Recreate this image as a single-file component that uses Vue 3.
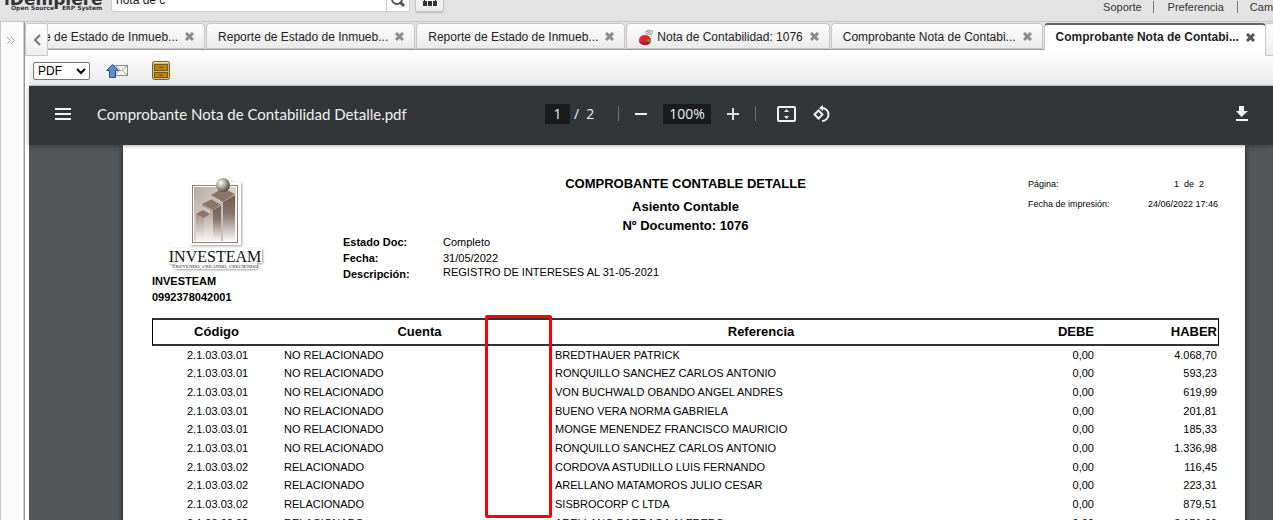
<template>
  <div class="desktop">
    <!-- Barra superior -->
    <header class="topbar">
      <svg class="brand" viewBox="0 0 102 24" role="img" aria-label="iDempiere">
        <text class="brand-name" x="0" y="17">iDempiere</text>
        <text class="brand-sub" x="7" y="22">Open Source</text>
        <text class="brand-sub" x="58" y="22">ERP System</text>
      </svg>
      <div class="search">
        <input v-model="query" type="text" aria-label="Buscar" />
        <button type="button" aria-label="Buscar documento">
          <svg width="16" height="16" viewBox="0 0 16 16" fill="none" stroke="#555" stroke-width="2">
            <circle cx="7" cy="7" r="5" />
            <path d="M10 10l4 4" stroke-width="3" />
          </svg>
        </button>
      </div>
      <button class="menu-btn" type="button" aria-label="Menú">
        <svg width="16" height="14" viewBox="0 0 16 14" fill="#333">
          <path d="M6 0h4v4H6zM7 4h2v2h5v2h-1V7H3v1H2V6h5zM1 8h4v5H1zM6 8h4v5H6zM11 8h4v5h-4z" />
        </svg>
      </button>
      <nav class="user-links">
        <a href="#">Soporte</a>
        <a href="#">Preferencia</a>
        <a href="#">Cambiar Rol</a>
      </nav>
    </header>

    <div class="workspace">
      <aside class="west">
        <button type="button" aria-label="Expandir panel">
          <svg width="8" height="9" viewBox="0 0 8 9" fill="none" stroke="#a8a8a8" stroke-width="1">
            <path d="M0 1l3.500 3.500L0 8M4 1l3.500 3.500L4 8" />
          </svg>
        </button>
      </aside>

      <main class="main">
        <!-- Pestañas de ventanas abiertas -->
        <div class="tabbar">
          <button class="scroll scroll-left" type="button" aria-label="Anterior">
            <svg width="8" height="12" viewBox="0 0 8 12" fill="none" stroke="#777" stroke-width="2">
              <path d="M7 1L2 6l5 5" />
            </svg>
          </button>
          <div class="tab-clip">
            <ul class="tabs">
              <li v-for="(tab, i) in tabs" :key="i" class="tab" :class="{ active: i === activeTab }" @click="activeTab = i">
                <svg v-if="tab.icon" class="tab-icon" width="16" height="16" viewBox="0 0 16 16">
                  <path d="M7 3l3-2 5 1-2 4-4-1z" fill="#e8e8e8" stroke="#aaa" />
                  <path d="M9 2l4 3M12 2l-3 3" stroke="#999" />
                  <ellipse cx="7" cy="11" rx="6" ry="5" fill="#e8202a" />
                  <path d="M1 12a6 4 0 0 0 12 0q-6 3-12 0z" fill="#b5121b" />
                  <path d="M8 11l5-1-1 4z" fill="#3fae2a" />
                </svg>
                <span>{{ tab.title }}</span>
                <button class="close" type="button" aria-label="Cerrar">
                  <svg width="9" height="9" viewBox="0 0 9 9" fill="none" stroke="currentColor" stroke-width="3">
                    <path d="M1 1l7 7M8 1l-7 7" />
                  </svg>
                </button>
              </li>
            </ul>
          </div>
          <button class="scroll scroll-right" type="button" aria-label="Siguiente"></button>
        </div>

        <div class="report">
          <div class="report-bar">
            <select v-model="format" aria-label="Formato">
              <option>PDF</option>
              <option>HTML</option>
              <option>Excel</option>
            </select>
            <button class="tool" type="button" aria-label="Enviar correo">
              <svg width="22" height="16" viewBox="0 0 22 16">
                <rect x="8.500" y="2.500" width="13" height="10" fill="#f4f4f4" stroke="#8a8a8a" />
                <path d="M9 12l5-5M21 12l-5-5M10 3l5 5 6-5" fill="none" stroke="#aaa" />
                <path d="M6.500 1.500l6 6h-3v7h-6v-7h-3z" fill="#5b8fd0" stroke="#24508f" />
              </svg>
            </button>
            <button class="tool" type="button" aria-label="Archivar">
              <svg width="18" height="20" viewBox="0 0 18 20">
                <rect x=".5" y=".5" width="17" height="18" rx="2" fill="#d3b775" stroke="#76622b" />
                <path d="M2 1.500h14" stroke="#efe0b4" />
                <rect x="2.500" y="3.500" width="13" height="6" fill="#c67c10" stroke="#6f5a1c" />
                <rect x="2.500" y="11.500" width="13" height="5" fill="#c67c10" stroke="#6f5a1c" />
                <path d="M7 6h4v1H7zM7 14h4v1H7z" fill="#5b4a18" />
              </svg>
            </button>
          </div>

          <!-- Visor PDF -->
          <div class="pdf-bar">
            <div class="pdf-title">
              <button type="button" aria-label="Menú lateral">
                <svg width="16" height="12" viewBox="0 0 16 12" fill="#f1f1f1">
                  <path d="M0 0h16v2H0zM0 5h16v2H0zM0 10h16v2H0z" />
                </svg>
              </button>
              <span>Comprobante Nota de Contabilidad Detalle.pdf</span>
            </div>
            <div class="pdf-controls">
              <input v-model="page" class="page-input" type="text" aria-label="Página" />
              <span class="slash">/</span>
              <span>2</span>
              <i class="divider"></i>
              <button type="button" aria-label="Alejar">
                <svg width="12" height="12" viewBox="0 0 12 12" fill="#f1f1f1"><path d="M0 5h12v2H0z" /></svg>
              </button>
              <input v-model="zoom" class="zoom-input" type="text" aria-label="Zoom" />
              <button type="button" aria-label="Acercar">
                <svg width="12" height="12" viewBox="0 0 12 12" fill="#ddd"><path d="M5 0h2v5h5v2H7v5H5V7H0V5h5z" /></svg>
              </button>
              <i class="divider"></i>
              <button type="button" aria-label="Ajustar a la página">
                <svg width="20" height="16" viewBox="0 0 20 16" fill="none" stroke="#f1f1f1" stroke-width="2">
                  <rect x="1" y="1" width="17" height="14" rx="1" />
                  <path d="M9.500 3l2.500 3H7zM9.500 13l2.500-3H7z" fill="#f1f1f1" stroke="none" />
                </svg>
              </button>
              <button type="button" aria-label="Girar">
                <svg width="18" height="18" viewBox="0 0 18 18" fill="none" stroke="#f1f1f1" stroke-width="2">
                  <path d="M5.500 5.500l4 4-4 4-4-4z" />
                  <path d="M9 3a6.500 6.500 0 1 1 0 13" />
                  <path d="M10 0v6L6 3z" fill="#f1f1f1" stroke="none" />
                </svg>
              </button>
            </div>
            <button class="download" type="button" aria-label="Descargar">
              <svg width="14" height="16" viewBox="0 0 14 16" fill="#f1f1f1">
                <path d="M4 0h5v5h4L6.500 11 1 5h3zM1 13h12v2H1z" />
              </svg>
            </button>
          </div>

          <div class="pdf-view">
            <article class="sheet">
              <div class="sheet-head">
                <div class="company">
                  <svg class="logo" width="98" height="98" viewBox="0 0 98 98" role="img" aria-label="Investeam">
                    <defs>
                      <linearGradient id="sky" x1="0" y1="0" x2="1" y2="1">
                        <stop offset="0" stop-color="#b5a79d" />
                        <stop offset="1" stop-color="#fff" />
                      </linearGradient>
                      <linearGradient id="front" x1="0" y1="0" x2="0" y2="1">
                        <stop offset="0" stop-color="#a39084" />
                        <stop offset="1" stop-color="#f8f5f3" />
                      </linearGradient>
                      <linearGradient id="side" x1="0" y1="0" x2="0" y2="1">
                        <stop offset="0" stop-color="#705c4c" />
                        <stop offset=".4" stop-color="#88756a" />
                        <stop offset="1" stop-color="#fbf9f8" />
                      </linearGradient>
                      <radialGradient id="ball" cx=".35" cy=".35" r=".7">
                        <stop offset="0" stop-color="#fff" />
                        <stop offset=".4" stop-color="#b9b9a4" />
                        <stop offset="1" stop-color="#4a4b36" />
                      </radialGradient>
                      <filter id="halo" x="-10%" y="-10%" width="125%" height="125%">
                        <feDropShadow dx="1" dy="1" stdDeviation="1" flood-color="#777" flood-opacity=".7" />
                      </filter>
                    </defs>
                    <g filter="url(#halo)" fill="#fff">
                      <rect x="23" y="7" width="51" height="63" rx="1" />
                      <circle cx="56" cy="10" r="9" />
                      <path d="M2 73h93v15h-5v6H8v-5H2z" />
                    </g>
                    <rect x="25.500" y="10.500" width="45" height="57" fill="url(#sky)" stroke="#8e8074" />
                    <path d="M26.500 66.500v-55h43v55z" fill="none" stroke="#fff" />
                    <path d="M29 39l8 4v23h-8z" fill="url(#front)" />
                    <path d="M37 43l6-4v27h-6z" fill="url(#side)" />
                    <path d="M29 39l7-4 7 4-6 4z" fill="#8b7668" />
                    <path d="M35 29l11 6v31h-9V43l6-4v-4l-8-4z" fill="url(#front)" />
                    <path d="M46 35l9-5v36h-9z" fill="url(#side)" />
                    <path d="M35 29l10-5 10 5-9 6z" fill="#8b7668" />
                    <path d="M44 20l12 7v39h-2V30l-10-6z" fill="#c9bcb3" />
                    <path d="M56 27l12-7v46H56z" fill="url(#side)" />
                    <path d="M44 20l12-7 12 6-12 8z" fill="#8b7668" />
                    <circle cx="56" cy="10" r="7" fill="url(#ball)" />
                    <text class="logo-name" x="48" y="87" text-anchor="middle">INVESTEAM</text>
                    <text class="logo-motto" x="48" y="93" text-anchor="middle">CREYENDO, CREANDO, CRECIENDO</text>
                  </svg>
                  <strong>INVESTEAM</strong>
                  <strong>0992378042001</strong>
                </div>

                <div class="center">
                  <h1>COMPROBANTE CONTABLE DETALLE</h1>
                  <h2>Asiento Contable</h2>
                  <h2>Nº Documento: 1076</h2>
                  <dl class="details">
                    <dt>Estado Doc:</dt>
                    <dd>Completo</dd>
                    <dt>Fecha:</dt>
                    <dd>31/05/2022</dd>
                    <dt>Descripción:</dt>
                    <dd class="description">REGISTRO DE INTERESES AL 31-05-2021</dd>
                  </dl>
                </div>

                <dl class="print-info">
                  <dt>Página:</dt>
                  <dd class="pages">1&nbsp; de&nbsp; 2</dd>
                  <dt>Fecha de impresión:</dt>
                  <dd>24/06/2022 17:46</dd>
                </dl>
              </div>

              <table class="entries">
                <colgroup>
                  <col class="c-code" />
                  <col class="c-account" />
                  <col />
                  <col class="c-debit" />
                  <col class="c-credit" />
                </colgroup>
                <thead>
                  <tr>
                    <th>Código</th>
                    <th class="account">Cuenta</th>
                    <th>Referencia</th>
                    <th class="amount">DEBE</th>
                    <th class="amount">HABER</th>
                  </tr>
                </thead>
                <tbody>
                  <tr v-for="(row, i) in rows" :key="i">
                    <td class="code">{{ row.code }}</td>
                    <td class="account">{{ row.account }}</td>
                    <td>{{ row.ref }}</td>
                    <td class="amount">0,00</td>
                    <td class="amount">{{ row.credit }}</td>
                  </tr>
                </tbody>
              </table>

              <!-- Marca roja sobre la columna vacía -->
              <div class="mark"></div>
            </article>
          </div>
        </div>
      </main>
    </div>
  </div>
</template>

<script setup>
import { ref } from 'vue'

const query = ref('nota de c')
const format = ref('PDF')
const page = ref('1')
const zoom = ref('100%')
const activeTab = ref(5)

const tabs = [
  { title: 'Reporte de Estado de Inmueb...' },
  { title: 'Reporte de Estado de Inmueb...' },
  { title: 'Reporte de Estado de Inmueb...' },
  { title: 'Nota de Contabilidad: 1076', icon: true },
  { title: 'Comprobante Nota de Contabi...' },
  { title: 'Comprobante Nota de Contabi...' },
]

const rows = [
  { code: '2.1.03.03.01', account: 'NO RELACIONADO', ref: 'BREDTHAUER PATRICK', credit: '4.068,70' },
  { code: '2.1.03.03.01', account: 'NO RELACIONADO', ref: 'RONQUILLO SANCHEZ CARLOS ANTONIO', credit: '593,23' },
  { code: '2.1.03.03.01', account: 'NO RELACIONADO', ref: 'VON BUCHWALD OBANDO ANGEL ANDRES', credit: '619,99' },
  { code: '2.1.03.03.01', account: 'NO RELACIONADO', ref: 'BUENO VERA NORMA GABRIELA', credit: '201,81' },
  { code: '2.1.03.03.01', account: 'NO RELACIONADO', ref: 'MONGE MENENDEZ FRANCISCO MAURICIO', credit: '185,33' },
  { code: '2.1.03.03.01', account: 'NO RELACIONADO', ref: 'RONQUILLO SANCHEZ CARLOS ANTONIO', credit: '1.336,98' },
  { code: '2.1.03.03.02', account: 'RELACIONADO', ref: 'CORDOVA ASTUDILLO LUIS FERNANDO', credit: '116,45' },
  { code: '2.1.03.03.02', account: 'RELACIONADO', ref: 'ARELLANO MATAMOROS JULIO CESAR', credit: '223,31' },
  { code: '2.1.03.03.02', account: 'RELACIONADO', ref: 'SISBROCORP C LTDA', credit: '879,51' },
  { code: '2.1.03.03.02', account: 'RELACIONADO', ref: 'ARELLANO BARRAGA ALFREDO', credit: '3.151,66' },
]
</script>

<style>
body {
  overflow: hidden;
}
</style>

<style scoped>
* {
  box-sizing: border-box;
}

button {
  padding: 0;
  border: 0;
  background: none;
  color: inherit;
  font: inherit;
  cursor: pointer;
}

svg {
  display: block;
}

.desktop {
  display: flex;
  flex-direction: column;
  height: 100vh;
  overflow: hidden;
  background: #e3e3e3;
  color: #222;
  font-family: "Liberation Sans", Arial, sans-serif;
  font-size: 12px;
}

/* --- barra superior --- */
.topbar {
  display: flex;
  align-items: flex-end;
  flex: none;
  height: 22px;
  padding: 0 0 9px 4px;
  border-bottom: 1px solid #c6c6c6;
  overflow: hidden;
}

.brand {
  flex: none;
  width: 102px;
  height: 24px;
  margin-right: 5px;
  overflow: visible;
  fill: #333;
  font-family: "DejaVu Sans", sans-serif;
  font-weight: bold;
}

.brand-name {
  font-size: 17px;
}

.brand-sub {
  font-size: 6px;
}

.search {
  display: flex;
  flex: none;
  width: 299px;
  height: 24px;
  border: 1px solid #ccc;
  border-radius: 3px;
  background: #fff;
}

.search input {
  flex: 1;
  min-width: 0;
  padding: 0 4px;
  border: 0;
  background: none;
  font: inherit;
  color: #222;
  outline: none;
}

.search button {
  display: flex;
  align-items: center;
  justify-content: center;
  width: 23px;
  border-left: 1px solid #ccc;
}

.menu-btn {
  display: flex;
  align-items: center;
  justify-content: center;
  flex: none;
  width: 29px;
  height: 24px;
  margin-left: 5px;
  border: 1px solid #c4c4c4;
  border-radius: 3px;
  background: linear-gradient(#fff, #ebebeb);
  box-shadow: 0 1px 1px #bbb;
}

.user-links {
  display: flex;
  align-items: center;
  flex: none;
  height: 10px;
  margin-left: auto;
  margin-right: -38px;
  font-size: 11px;
}

.user-links a {
  padding: 0 13px 0 14px;
  border-right: 1px solid #777;
  color: #333;
  line-height: 12px;
  text-decoration: none;
}

.user-links a:first-child {
  padding-right: 11px;
}

.user-links a:last-child {
  padding-left: 12px;
  padding-right: 0;
  border: 0;
}

/* --- zona de trabajo --- */
.workspace {
  display: flex;
  flex: 1;
  min-height: 0;
}

.west {
  flex: none;
  width: 24px;
  padding: 12px 0 0 6px;
  border-left: 1px solid #c8c8c8;
  border-right: 1px solid #ccc;
  background: #fcfcfc;
}

.main {
  display: flex;
  flex-direction: column;
  flex: 1;
  min-width: 0;
  border-left: 1px solid #999;
  background: #fff;
}

.tabbar {
  position: relative;
  flex: none;
  height: 28px;
  padding: 1px 8px 0 23px;
  border-bottom: 1px solid #999;
  background: #e3e3e3;
}

.scroll {
  position: absolute;
  top: 1px;
  z-index: 2;
  width: 23px;
  height: 33px;
  border: 1px solid #c8c8c8;
  border-radius: 3px 3px 0 0;
  background: linear-gradient(#fff, #eee);
}

.scroll-left {
  left: 0;
  padding-left: 7px;
}

.scroll-right {
  right: -15px;
}

.tab-clip {
  height: 27px;
  overflow: hidden;
}

/* lista desplazada hasta la pestaña activa */
.tabs {
  display: flex;
  gap: 1px;
  width: max-content;
  height: 27px;
  margin: 0 0 0 -52px;
  padding: 0;
  list-style: none;
}

.tab {
  display: flex;
  align-items: center;
  height: 26px;
  padding: 1px 10px 0 11px;
  border: 1px solid #c6c6c6;
  border-radius: 4px 4px 0 0;
  background: linear-gradient(#fdfdfd, #ebebeb);
  white-space: nowrap;
  cursor: pointer;
}

.tab.active {
  height: 27px;
  padding-top: 0;
  padding-bottom: 1px;
  border-top: 2px solid #666;
  border-bottom: 0;
  background: #fff;
  font-weight: bold;
}

.tab-icon {
  margin-right: 3px;
}

.close {
  margin-left: 7px;
  color: #8b8b8b;
}

.tab.active .close {
  color: #555;
}

.report {
  display: flex;
  flex-direction: column;
  flex: 1;
  min-height: 0;
  padding-left: 4px;
}

.report-bar {
  display: flex;
  align-items: center;
  flex: none;
  height: 36px;
  padding: 6px 4px 0;
  border-bottom: 1px solid #ccc;
  background: linear-gradient(#fff, #ebebeb);
}

.report-bar select {
  width: 57px;
  height: 18px;
  padding: 0;
  border: 1px solid #767676;
  border-radius: 2px;
  background-color: #fff;
  color: #000;
  font: inherit;
}

.tool {
  margin-left: 16px;
}

.tool + .tool {
  margin-left: 24px;
}

/* --- visor PDF --- */
.pdf-bar {
  display: grid;
  grid-template-columns: 516px auto 1fr;
  align-items: center;
  flex: none;
  z-index: 1;
  height: 59px;
  padding-right: 24px;
  padding-bottom: 4px;
  background: #323639;
  box-shadow: 0 1px 4px rgba(0, 0, 0, 0.3);
  color: #f1f1f1;
  font-family: Lato, "Open Sans", sans-serif;
  font-size: 14px;
}

.pdf-title {
  display: flex;
  align-items: center;
  gap: 26px;
  padding-left: 26px;
  font-size: 15px;
}

.pdf-controls {
  display: flex;
  align-items: center;
  font-family: "Open Sans", sans-serif;
}

.pdf-controls input {
  height: 20px;
  padding: 0;
  border: 0;
  background: #191b1c;
  color: #f1f1f1;
  font: inherit;
  text-align: center;
}

.page-input {
  width: 25px;
}

.zoom-input {
  width: 48px;
  margin: 0 16px;
}

.slash {
  margin: 0 7px 0 4px;
}

.divider {
  width: 1px;
  height: 15px;
  margin: 0 16px 0 24px;
  background: #6b6e70;
}

.zoom-input ~ .divider {
  margin-left: 16px;
  margin-right: 21px;
}

.pdf-controls button:last-child {
  margin-left: 16px;
}

.download {
  justify-self: end;
}

.pdf-view {
  flex: 1;
  min-height: 0;
  padding: 0 28px 0 94px;
  overflow: hidden;
  background: #525659;
}

.sheet {
  position: relative;
  padding: 29px 26px 40px 29px;
  background: #fff;
  box-shadow: 0 0 6px rgba(0, 0, 0, 0.6);
  color: #000;
  font-size: 11px;
}

.sheet-head {
  display: grid;
  grid-template-columns: 191px 1fr 191px;
  height: 144px;
}

.company strong {
  display: block;
  line-height: 16px;
}

.logo {
  margin: 1px 0 0 15px;
}

.logo-name {
  font-family: "Liberation Serif", serif;
  font-size: 16px;
  fill: #111;
}

.logo-motto {
  font-family: "Liberation Serif", serif;
  font-size: 5px;
  fill: #222;
}

.center h1,
.center h2 {
  margin: 0;
  font-size: 13px;
  line-height: 19px;
  text-align: center;
}

.center h1 {
  padding-bottom: 4px;
}

.details,
.print-info {
  display: grid;
  margin: 0;
}

.details dd,
.print-info dd {
  margin: 0;
}

.details {
  grid-template-columns: 100px 1fr;
  margin-top: -1px;
  line-height: 16px;
}

.details dt {
  font-weight: bold;
}

.details .description {
  line-height: 13px;
}

.print-info {
  grid-template-columns: 1fr auto;
  align-content: start;
  padding-right: 1px;
  font-size: 9px;
  line-height: 20px;
}

.print-info .pages {
  padding-left: 12px;
  text-align: center;
}

.entries {
  width: 100%;
  table-layout: fixed;
  border-collapse: separate;
  border-spacing: 0;
}

.c-code,
.c-debit {
  width: 128px;
}

.c-account {
  width: 275px;
}

.c-credit {
  width: 124px;
}

.entries th,
.entries td {
  padding: 0;
  text-align: left;
  white-space: nowrap;
}

.entries th {
  height: 28px;
  border-top: 2px solid #333;
  border-bottom: 2px solid #333;
  font-size: 13px;
  line-height: 16px;
  text-align: center;
}

.entries th:first-child {
  border-left: 1px solid #000;
}

.entries th:last-child {
  border-right: 1px solid #000;
}

.entries td {
  height: 19px;
  padding-top: 1px;
  line-height: 16px;
  vertical-align: top;
}

.entries tr:nth-child(3n + 1) td {
  height: 18px;
}

.entries .code {
  padding-left: 35px;
}

.entries .account {
  padding-left: 4px;
}

.entries .amount {
  padding-right: 1px;
  text-align: right;
}

.entries td.amount:last-child {
  padding-right: 2px;
}

.mark {
  position: absolute;
  top: 170px;
  left: 362px;
  width: 67px;
  height: 203px;
  border: 3px solid #f00;
  border-radius: 2px;
}
</style>
